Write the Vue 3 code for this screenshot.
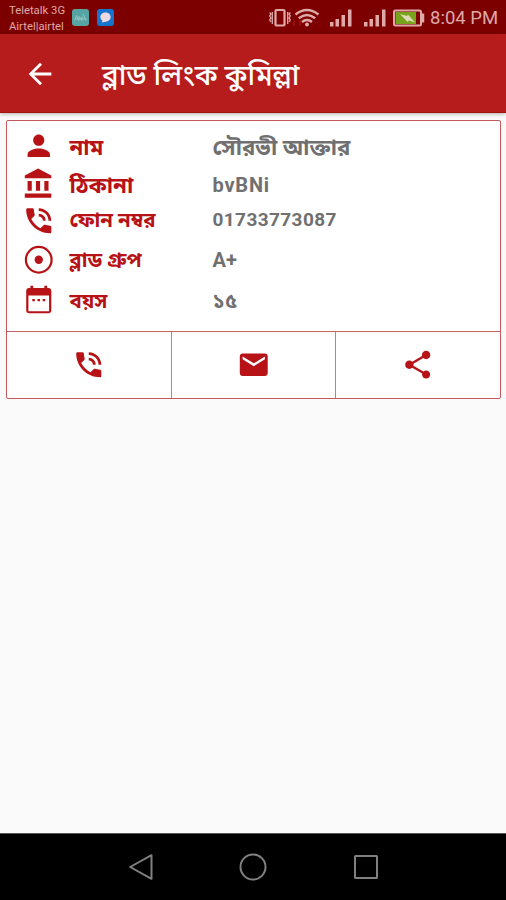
<script setup>
const icons = {
  person:
    "M12 12c2.21 0 4-1.79 4-4s-1.79-4-4-4-4 1.79-4 4 1.79 4 4 4zm0 2c-2.67 0-8 1.34-8 4v2h16v-2c0-2.66-5.33-4-8-4z",
  bank: "M4 10v7h3v-7H4zm6 0v7h3v-7h-3zM2 22h19v-3H2v3zm14-12v7h3v-7h-3zM11.5 1L2 6v2h19V6l-9.500-5z",
  phone:
    "M20 15.500c-1.250 0-2.450-.2-3.570-.570-.350-.110-.740-.030-1.020.240l-2.200 2.200c-2.830-1.440-5.150-3.750-6.590-6.590l2.200-2.210c.280-.260.360-.650.250-1C8.700 6.450 8.500 5.250 8.500 4c0-.550-.450-1-1-1H4c-.550 0-1 .450-1 1 0 9.390 7.610 17 17 17 .550 0 1-.450 1-1v-3.500c0-.550-.450-1-1-1zM19 12h2c0-4.970-4.030-9-9-9v2c3.870 0 7 3.130 7 7zm-4 0h2c0-2.760-2.240-5-5-5v2c1.660 0 3 1.340 3 3z",
  blood:
    "M12 2a10 10 0 1 0 0 20 10 10 0 0 0 0-20zm0 18.400a8.400 8.400 0 1 1 0-16.800 8.400 8.400 0 0 1 0 16.800zM12 9a3 3 0 1 0 0 6 3 3 0 0 0 0-6z",
  calendar:
    "M9.200 11.500H7.400v1.600h1.800v-1.600zm3.700 0h-1.800v1.600h1.800v-1.600zm3.700 0h-1.800v1.600h1.800v-1.600zM19 3.500h-1V2h-2v1.500H8V2H6v1.500H5c-1.110 0-1.990.9-1.990 2L3 19.700c0 1.100.890 2 2 2h14c1.100 0 2-.9 2-2V5.500c0-1.100-.9-2-2-2zm.4 16.800H4.600V9h14.800v11.300z",
  mail: "M20 4H4c-1.100 0-1.990.9-1.990 2L2 18c0 1.100.9 2 2 2h16c1.100 0 2-.9 2-2V6c0-1.100-.9-2-2-2zm0 4l-8 5-8-5V6l8 5 8-5v2z",
  share:
    "M18 16.080c-.760 0-1.440.3-1.960.770L8.910 12.700c.050-.230.090-.460.090-.7s-.040-.470-.090-.7l7.050-4.110c.540.5 1.250.810 2.040.810 1.660 0 3-1.340 3-3s-1.340-3-3-3-3 1.340-3 3c0 .240.040.470.090.7L8.040 9.810C7.500 9.310 6.790 9 6 9c-1.660 0-3 1.340-3 3s1.340 3 3 3c.790 0 1.500-.310 2.040-.810l7.120 4.160c-.050.210-.080.430-.080.650 0 1.610 1.310 2.920 2.920 2.920s2.920-1.310 2.920-2.920-1.310-2.920-2.920-2.920z",
};

const rows = [
  { key: "name", icon: "person", label: "নাম", value: "সৌরভী আক্তার" },
  { key: "address", icon: "bank", label: "ঠিকানা", value: "bvBNi" },
  { key: "phone", icon: "phone", label: "ফোন নম্বর", value: "01733773087" },
  { key: "group", icon: "blood", label: "ব্লাড গ্রুপ", value: "A+" },
  { key: "age", icon: "calendar", label: "বয়স", value: "১৫" },
];

const actions = ["phone", "mail", "share"];
</script>

<template>
  <div class="screen">
    <div class="status">
      <div class="carriers">
        <span>Teletalk 3G</span>
        <span>Airtel|airtel</span>
      </div>
      <svg class="app-icon" viewBox="0 0 17 17">
        <rect width="17" height="17" rx="3" fill="#56a5a4" />
        <path
          d="M2.500 11.500l2-5 2 5M7 11.500V7.500l3 4V7.500M11 5l3 6.500M3.500 10h11"
          fill="none"
          stroke="#91c6c3"
          stroke-width="1"
        />
      </svg>
      <svg class="app-icon" viewBox="0 0 17 17">
        <rect width="17" height="17" rx="3" fill="#1673ce" />
        <path
          d="M8.500 3.500c3 0 5.200 2 5.200 4.500s-2.200 4.700-5.200 4.700L5 13.500l.3-2C4 10.500 3.300 9.500 3.300 8c0-2.500 2.200-4.500 5.200-4.500z"
          fill="#eed9e0"
        />
      </svg>
      <svg class="tray" viewBox="0 0 158 34">
        <g fill="none" stroke="#dfa9a9">
          <rect x="7.500" y="10" width="9" height="15.500" rx="1" stroke-width="2.200" />
          <path
            d="M4.300 12v12M19.700 12v12M1.700 12.500l1.200 1.500-1.200 2 1.200 2-1.200 2 1.200 2M22.300 12.500l-1.200 1.500 1.200 2-1.200 2 1.200 2-1.200 2"
            stroke-width="1.300"
          />
          <path
            d="M27.500 14.500q11.500-9 23 0M30.800 18.300q8.200-6.500 16.400 0M34 22q5-4 10 0"
            stroke-width="2.500"
          />
        </g>
        <g fill="#dfa9a9">
          <circle cx="39" cy="24.500" r="2" />
          <path
            d="M62 22h3.500v4.500H62zM67.500 19H71v7.500h-3.500zM73.500 15H77v11.500h-3.500zM80 9.500h3.500v17H80z"
          />
          <path
            d="M96 22h3.500v4.500H96zM101.500 19h3.500v7.500h-3.500zM107.500 15h3.500v11.500h-3.500zM114 9.500h3.500v17H114z"
          />
        </g>
        <path d="M26 21v5M32 20v6" stroke="#a90f0f" stroke-width="1.500" />
        <rect
          x="126"
          y="10.500"
          width="27"
          height="15"
          rx="1.500"
          fill="#7c0000"
          stroke="#dfa9a9"
          stroke-width="2"
        />
        <path d="M155 13.500v9" stroke="#dfa9a9" stroke-width="2.500" />
        <path d="M127.500 12h20.500v12h-20.500z" fill="#76a51c" />
        <path
          d="M132 14l7 2 1-1.500 7 8-6-2-1.500 1.500z"
          fill="#e1d9b5"
        />
      </svg>
      <span class="clock">8:04 PM</span>
    </div>

    <header class="toolbar">
      <svg class="back" viewBox="0 0 24 24">
        <path
          d="M20 11H7.830l5.590-5.590L12 4l-8 8 8 8 1.410-1.410L7.830 13H20v-2z"
        />
      </svg>
      <h1 class="title">ব্লাড লিংক কুমিল্লা</h1>
    </header>

    <main class="content">
      <section class="card">
        <div class="details">
          <div
            v-for="row in rows"
            :key="row.key"
            class="row"
            :class="'row--' + row.key"
          >
            <svg class="icon" viewBox="0 0 24 24">
              <path :d="icons[row.icon]" />
            </svg>
            <span class="label">{{ row.label }}</span>
            <span class="value">{{ row.value }}</span>
          </div>
        </div>
        <div class="actions">
          <button v-for="action in actions" :key="action" class="action">
            <svg class="icon" viewBox="0 0 24 24">
              <path :d="icons[action]" />
            </svg>
          </button>
        </div>
      </section>
    </main>

    <nav class="navbar">
      <svg viewBox="0 0 28 28">
        <path d="M3.200 14L24.500 2.200v23.600z" />
      </svg>
      <svg viewBox="0 0 28 28">
        <circle cx="14" cy="14" r="12.500" />
      </svg>
      <svg viewBox="0 0 28 28">
        <rect x="3" y="3" width="22" height="22" rx="0.500" />
      </svg>
    </nav>
  </div>
</template>

<style>
body {
  margin: 0;
}
</style>

<style scoped>
.screen {
  display: flex;
  flex-direction: column;
  width: 506px;
  height: 900px;
  overflow: hidden;
  background: #fafafa;
  font-family: Roboto, "Noto Sans Bengali", "Noto Sans", sans-serif;
}

.status {
  display: flex;
  align-items: center;
  box-sizing: border-box;
  height: 34px;
  padding: 0 8px 0 9px;
  background: #7c0000;
  color: #dfa9a9;
}

.carriers {
  display: flex;
  flex-direction: column;
  width: 63px;
  padding-top: 3px;
  font-size: 11.3px;
  line-height: 15.5px;
  white-space: nowrap;
}

.app-icon {
  width: 17px;
  height: 17px;
  margin-right: 8px;
}

.tray {
  width: 158px;
  height: 34px;
  margin-left: auto;
}

.clock {
  width: 68px;
  margin-left: 4px;
  padding-top: 2px;
  font-size: 18.5px;
  white-space: nowrap;
}

.toolbar {
  display: flex;
  align-items: center;
  box-sizing: border-box;
  height: 79px;
  padding-left: 23px;
  background: #b71c1c;
  border-bottom: 1px solid #a50f10;
  box-shadow: 0 1px 4px rgba(0, 0, 0, 0.3);
}

.back {
  width: 34px;
  height: 34px;
  margin-top: 1px;
  fill: #fff;
}

.title {
  margin: 0 0 0 45px;
  padding-top: 9px;
  color: #fff;
  font-size: 28.3px;
  font-weight: 500;
  white-space: nowrap;
}

.content {
  flex: 1;
  padding: 7px 5px 0 6px;
}

.card {
  box-sizing: border-box;
  height: 279px;
  border: 1px solid #c4595c;
  border-radius: 2px;
  background: #fff;
}

.details {
  box-sizing: border-box;
  height: 210px;
  padding-top: 6px;
}

.row {
  display: grid;
  grid-template-columns: 48px 143px 1fr;
  align-items: center;
  height: 37px;
  padding-left: 14.5px;
  font-size: 20px;
  font-weight: 700;
  line-height: 30px;
  white-space: nowrap;
}

.row--name,
.row--phone {
  height: 38px;
}

.row--name {
  font-size: 22.2px;
}

.row--phone {
  font-size: 19px;
}

.row--group {
  height: 39px;
}

.row--age {
  height: 42px;
  font-size: 20.4px;
}

.icon {
  width: 33.5px;
  height: 33.5px;
  fill: #b71215;
}

.label {
  color: #b71215;
}

.row--phone .label,
.row--group .label {
  font-size: 20.4px;
}

.row--address .label {
  font-size: 22.4px;
}

.value {
  color: #707070;
}

.row--name .label,
.row--name .value,
.row--address .label,
.row--address .value,
.row--age .label,
.row--age .value {
  padding-top: 2px;
}

.row--phone .label,
.row--phone .value {
  padding-bottom: 3px;
}

.row--address .value {
  letter-spacing: 0.8px;
}

.row--phone .value {
  letter-spacing: 0.4px;
}

.actions {
  display: grid;
  grid-template-columns: 165px 164px 1fr;
  height: 67px;
  box-sizing: border-box;
  border-top: 1px solid #c46265;
}

.action {
  display: flex;
  align-items: center;
  justify-content: center;
  padding: 0;
  border: 0;
  border-right: 1px solid #cd7b7d;
  background: none;
}

.action:last-child {
  border-right: 0;
}

.navbar {
  display: flex;
  align-items: center;
  justify-content: center;
  gap: 84.5px;
  box-sizing: border-box;
  height: 67px;
  border-top: 1px solid #555;
  background: #000;
}

.navbar svg {
  width: 28px;
  height: 28px;
  fill: none;
  stroke: #808080;
  stroke-width: 2;
  stroke-linejoin: round;
}
</style>
